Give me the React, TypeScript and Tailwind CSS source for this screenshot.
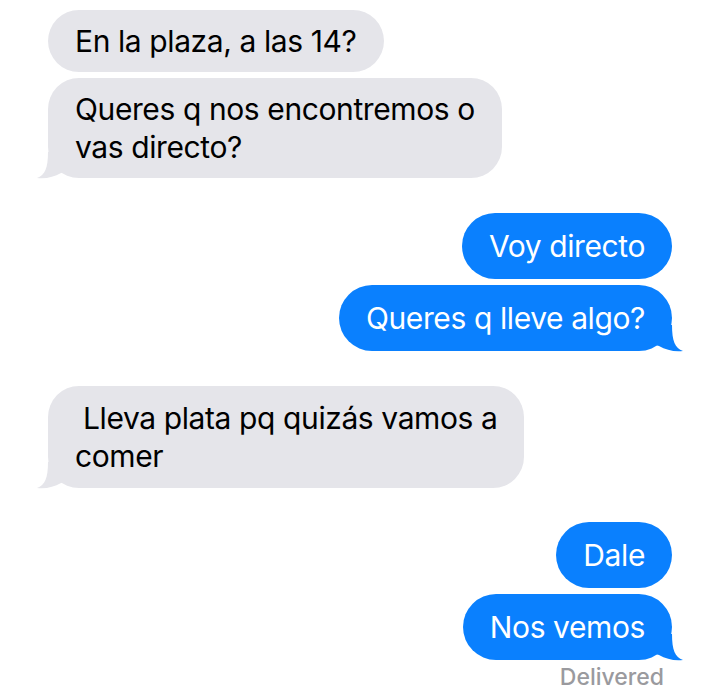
import React from 'react';

const GRAY = '#e5e5ea';
const BLUE = '#0a80fe';

function Tail({ side, color }: { side: 'left' | 'right'; color: string }) {
  return (
    <svg
      width="44"
      height="30"
      viewBox="-12 -28 44 30"
      className={side === 'left' ? 'absolute -left-[12px] bottom-[-2px]' : 'absolute -right-[12px] bottom-[-2px] -scale-x-100'}
    >
      <path d="M0 -26 C0 -10 -3 -3 -11 0 C-2 1 6 -1 13 -5 L30 -10 L30 -26 Z" fill={color} />
    </svg>
  );
}

function Received({ children, tail }: { children: React.ReactNode; tail?: boolean }) {
  return (
    <div className="flex justify-start">
      <div className="relative rounded-[31px] bg-[#e5e5ea] px-[27px] py-[12px] text-black whitespace-pre">
        {tail && <Tail side="left" color={GRAY} />}
        <span className="relative">{children}</span>
      </div>
    </div>
  );
}

function Sent({ children, tail }: { children: React.ReactNode; tail?: boolean }) {
  return (
    <div className="flex justify-end">
      <div className="relative rounded-[33px] bg-[#0a80fe] px-[27px] py-[14px] text-white whitespace-pre">
        {tail && <Tail side="right" color={BLUE} />}
        <span className="relative">{children}</span>
      </div>
    </div>
  );
}

export default function App() {
  return (
    <div
      className="min-h-[698px] w-[720px] bg-white px-[48px] pt-[10px] text-[30px] leading-[38px] tracking-[-0.4px]"
      style={{ fontFamily: 'Inter, "Noto Sans", sans-serif' }}
    >
      <div className="flex flex-col gap-[6px]">
        <Received>En la plaza, a las 14?</Received>
        <Received tail>
          Queres q nos encontremos o{'\n'}vas directo?
        </Received>
      </div>

      <div className="mt-[35px] flex flex-col gap-[6px]">
        <Sent>Voy directo</Sent>
        <Sent tail>Queres q lleve algo?</Sent>
      </div>

      <div className="mt-[35px] flex flex-col gap-[6px]">
        <div className="flex justify-start">
          <div className="relative rounded-[31px] bg-[#e5e5ea] px-[27px] py-[13px] text-black whitespace-pre">
            <Tail side="left" color={GRAY} />
            <span className="relative">{' Lleva plata pq quizás vamos a\ncomer'}</span>
          </div>
        </div>
      </div>

      <div className="mt-[34px] flex flex-col gap-[6px]">
        <Sent>Dale</Sent>
        <Sent tail>Nos vemos</Sent>
      </div>

      <div className="mt-[3px] pr-[8px] text-right text-[23px] leading-[28px] font-medium tracking-normal text-[#9a9a9e]">
        Delivered
      </div>
    </div>
  );
}
